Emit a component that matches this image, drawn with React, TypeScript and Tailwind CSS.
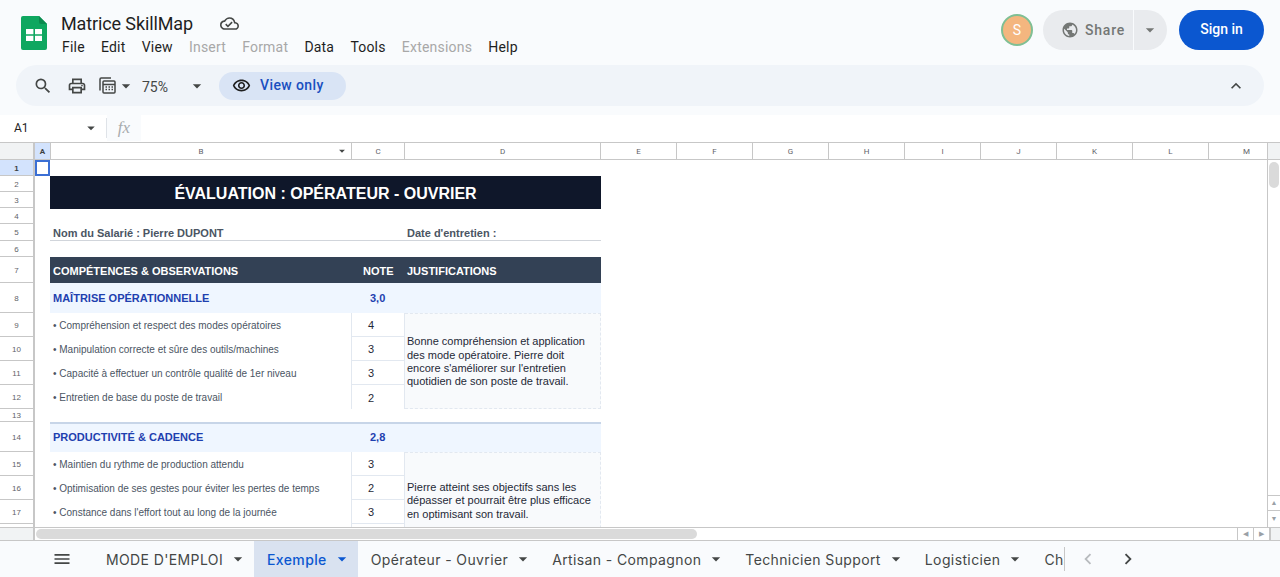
import {
  MdArrowDropDown,
  MdChevronLeft,
  MdChevronRight,
  MdExpandLess,
  MdMenu,
  MdOutlineCloudDone,
  MdOutlinePrint,
  MdOutlineRemoveRedEye,
  MdPublic,
  MdSearch,
} from 'react-icons/md';

const menuItems = [
  { label: 'File' },
  { label: 'Edit' },
  { label: 'View' },
  { label: 'Insert', disabled: true },
  { label: 'Format', disabled: true },
  { label: 'Data' },
  { label: 'Tools' },
  { label: 'Extensions', disabled: true },
  { label: 'Help' },
];

const rowHeaders = [
  { n: 1, h: 'h-[16px]' },
  { n: 2, h: 'h-[16px]' },
  { n: 3, h: 'h-[16px]' },
  { n: 4, h: 'h-[16px]' },
  { n: 5, h: 'h-[17px]' },
  { n: 6, h: 'h-[16px]' },
  { n: 7, h: 'h-[26px]' },
  { n: 8, h: 'h-[30px]' },
  { n: 9, h: 'h-[24px]' },
  { n: 10, h: 'h-[24px]' },
  { n: 11, h: 'h-[24px]' },
  { n: 12, h: 'h-[24px]' },
  { n: 13, h: 'h-[13px]' },
  { n: 14, h: 'h-[30px]' },
  { n: 15, h: 'h-[24px]' },
  { n: 16, h: 'h-[24px]' },
  { n: 17, h: 'h-[24px]' },
  { n: 18, h: 'h-[24px]' },
];

const otherColumns = ['E', 'F', 'G', 'H', 'I', 'J', 'K', 'L', 'M'];

const tabs = ['MODE D\'EMPLOI', 'Exemple', 'Opérateur - Ouvrier', 'Artisan - Compagnon', 'Technicien Support', 'Logisticien'];

const CalcIcon = () => (
  <svg width="19" height="19" viewBox="0 0 19 19" fill="none" stroke="#444746" strokeWidth="1.5">
    <path d="M2 14.5V3.2C2 2.5 2.5 2 3.2 2H13" />
    <rect x="5" y="5" width="12" height="12" rx="1" />
    <path d="M5 8.5h12" />
    <path d="M7.5 11h1.5M10.5 11H12M13.5 11h1.5M7.5 13.5h1.5M10.5 13.5H12M13.5 13.5h1.5" strokeWidth="1.4" />
  </svg>
);

const SheetsLogo = () => (
  <svg width="26" height="34" viewBox="0 0 26 34" className="shrink-0">
    <path d="M2 0h16l8 8v24a2 2 0 0 1-2 2H2a2 2 0 0 1-2-2V2a2 2 0 0 1 2-2z" fill="#0fa760" />
    <path d="M18 0l8 8h-6a2 2 0 0 1-2-2z" fill="#0b8a4e" />
    <path d="M5 13h16v12H5z" fill="#fff" />
    <path d="M12.4 13h1.6v12h-1.6zM5 18.3h16v1.5H5z" fill="#0fa760" />
  </svg>
);

const Item = ({ label, note, last }: { label: string; note: number; last?: boolean }) => (
  <>
    <div className="flex items-center pl-[3px] text-[10px] text-[#4b5563]">• {label}</div>
    <div
      className={`flex items-center border-x border-[#e2e8f0] pl-[16px] pt-[2px] text-[11px] text-[#1f2937] ${
        last ? '' : 'border-b'
      }`}
    >
      {note}
    </div>
  </>
);

const Justification = ({ lines }: { lines: string[] }) => (
  <div className="row-span-4 flex flex-col justify-center border-y border-r border-dashed border-[#e2e8f0] bg-[#f8fafc] pl-[2px] pt-[2px] text-[11px] leading-[13.4px] text-[#1f2937]">
    {lines.map((line) => (
      <span key={line} className="whitespace-nowrap">{line}</span>
    ))}
  </div>
);

const App = () => {
  return (
    <div className="flex h-[577px] w-[1280px] flex-col overflow-hidden bg-white font-['Roboto',sans-serif]">
      <div className="h-[115px] shrink-0 bg-[#f9fbfd]">
        <div className="flex h-[65px]">
          <div className="ml-[21px] mt-[16px]">
            <SheetsLogo />
          </div>
          <div className="ml-[14px] mt-[11px]">
            <div className="flex h-[24px] items-center text-[18px] tracking-[-0.12px] text-[#1f1f1f]">
              <span>Matrice SkillMap</span>
              <MdOutlineCloudDone className="ml-[27px] text-[19px] text-[#444746]" />
            </div>
            <div className="mt-[1px] flex h-[22px] items-center gap-[16.2px] pl-[1px] text-[14px] tracking-[0.2px]">
              {menuItems.map((item) => (
                <span key={item.label} className={item.disabled ? 'text-[#a8a8a8]' : 'text-[#1f1f1f]'}>
                  {item.label}
                </span>
              ))}
            </div>
          </div>
          <div className="ml-auto mr-[16px] mt-[10px] flex h-[40px] items-center">
            <div className="flex h-[32px] w-[32px] items-center justify-center rounded-full border-2 border-[#7fbf94] bg-[#f4b67f] text-[14px] text-white">
              S
            </div>
            <div className="ml-[10px] flex h-[40px] w-[124px] items-center rounded-full bg-[#e9ebee] text-[#747775]">
              <MdPublic className="ml-[18px] text-[18px]" />
              <span className="ml-[6px] text-[14px] font-medium tracking-[0.8px]">Share</span>
              <div className="ml-[8px] h-[40px] w-px bg-[#f9fbfd]" />
              <MdArrowDropDown className="ml-[6px] text-[20px]" />
            </div>
            <div className="ml-[12px] flex h-[40px] w-[85px] items-center justify-center rounded-full bg-[#0b57d0] pb-[2px] text-[14px] font-medium text-white">
              Sign in
            </div>
          </div>
        </div>
        <div className="mx-[16px] flex h-[41px] items-center rounded-full bg-[#f0f4f9] text-[#444746]">
          <MdSearch className="ml-[17px] text-[20px]" />
          <MdOutlinePrint className="ml-[14px] text-[20px]" />
          <div className="ml-[11px]">
            <CalcIcon />
          </div>
          <MdArrowDropDown className="ml-[-1px] text-[20px]" />
          <span className="ml-[6px] mt-[4px] text-[14px]">75%</span>
          <MdArrowDropDown className="ml-[19px] text-[20px]" />
          <div className="ml-[12px] flex h-[28px] w-[127px] items-center rounded-full bg-[#d9e4f5]">
            <MdOutlineRemoveRedEye className="ml-[13px] text-[19px] text-[#1f1f1f]" />
            <span className="ml-[9px] text-[14px] font-medium tracking-[0.4px] text-[#1a4fc0]">View only</span>
          </div>
          <MdExpandLess className="ml-auto mr-[18px] text-[20px]" />
        </div>
      </div>

      <div className="flex h-[28px] shrink-0 items-center border-b border-[#c7c7c7] bg-white pb-[1px]">
        <span className="ml-[14px] w-[68px] text-[12px] text-[#1f1f1f]">A1</span>
        <MdArrowDropDown className="text-[18px] text-[#444746]" />
        <div className="ml-[6px] h-[20px] w-px bg-[#dfe3e8]" />
        <div className="flex h-full w-[34px] items-center justify-center bg-[#f9fbfd] font-['Liberation_Serif',serif] text-[17px] italic text-[#a8abae]">
          fx
        </div>
      </div>

      <div className="flex h-[384px] shrink-0">
        <div className="w-[1268px] overflow-hidden border-r border-[#c7c7c7]">
          <div className="flex h-[17px] w-[1400px] border-b border-[#c7c7c7] pt-[2px] text-[8px] text-[#5f6368]">
            <div className="mt-[-2px] w-[33px] bg-[#f1f3f4]" />
            <div className="mt-[-2px] w-[2px] bg-[#c7c7c7]" />
            <div className="mt-[-2px] flex w-[15px] items-center justify-center bg-[#d3e3fd] pt-[2px] font-bold text-[#3c4043]">A</div>
            <div className="relative mt-[-2px] flex w-[302px] items-center justify-center border-x border-[#c7c7c7] pt-[2px]">
              B
              <MdArrowDropDown className="absolute right-[2px] top-[1px] text-[14px] text-[#444746]" />
            </div>
            <div className="mt-[-2px] flex w-[53px] items-center justify-center border-r border-[#c7c7c7] pt-[2px]">C</div>
            <div className="mt-[-2px] flex w-[196px] items-center justify-center border-r border-[#c7c7c7] pt-[2px]">D</div>
            {otherColumns.map((c) => (
              <div key={c} className="mt-[-2px] flex w-[76px] items-center justify-center border-r border-[#c7c7c7] pt-[2px]">{c}</div>
            ))}
          </div>

          <div className="flex font-['Liberation_Sans',sans-serif]">
            <div className="w-[35px] shrink-0 border-r-2 border-[#c7c7c7]">
              {rowHeaders.map((row) => (
                <div
                  key={row.n}
                  className={`${row.h} flex items-center justify-center border-b border-[#c7c7c7] pt-[2px] text-[8px] ${
                    row.n === 1 ? 'bg-[#d3e3fd] font-bold text-[#3c4043]' : 'text-[#5f6368]'
                  }`}
                >
                  {row.n}
                </div>
              ))}
            </div>

            <div className="w-[15px] shrink-0">
              <div className="h-[16px] border-2 border-[#3b6fd4]" />
            </div>

            <div className="grid grid-cols-[301px_54px_196px] grid-rows-[16px_16px_17px_15px_17px_16px_26px_30px_24px_24px_24px_24px_13px_30px_24px_24px_24px_24px]">
              <div className="col-span-3" />
              <div className="col-span-3 row-span-2 flex items-center justify-center bg-[#0f172a] pt-[2px] text-[16px] font-bold text-white">
                ÉVALUATION : OPÉRATEUR - OUVRIER
              </div>
              <div className="col-span-3" />

              <div className="col-span-2 flex items-center border-b border-[#d1d5db] pl-[3px] pt-[2px] text-[11px] font-bold text-[#4b5563]">
                Nom du Salarié : Pierre DUPONT
              </div>
              <div className="flex items-center border-b border-[#d1d5db] pl-[2px] pt-[2px] text-[11px] font-bold text-[#4b5563]">
                Date d'entretien :
              </div>
              <div className="col-span-3" />

              <div className="flex items-center bg-[#334155] pl-[3px] pt-[2px] text-[11px] font-bold text-white">
                COMPÉTENCES &amp; OBSERVATIONS
              </div>
              <div className="flex items-center bg-[#334155] pl-[12px] pt-[2px] text-[11px] font-bold text-white">NOTE</div>
              <div className="flex items-center bg-[#334155] pl-[2px] pt-[2px] text-[11px] font-bold text-white">JUSTIFICATIONS</div>

              <div className="flex items-center bg-[#eff6ff] pl-[3px] text-[11px] font-bold text-[#1e40af]">
                MAÎTRISE OPÉRATIONNELLE
              </div>
              <div className="flex items-center bg-[#eff6ff] pl-[19px] text-[11px] font-bold text-[#1e40af]">3,0</div>
              <div className="bg-[#eff6ff]" />
              <Item label="Compréhension et respect des modes opératoires" note={4} />
              <Justification
                lines={[
                  'Bonne compréhension et application',
                  'des mode opératoire. Pierre doit',
                  "encore s'améliorer sur l'entretien",
                  'quotidien de son poste de travail.',
                ]}
              />
              <Item label="Manipulation correcte et sûre des outils/machines" note={3} />
              <Item label="Capacité à effectuer un contrôle qualité de 1er niveau" note={3} />
              <Item label="Entretien de base du poste de travail" note={2} last />
              <div className="col-span-3" />

              <div className="flex items-center border-t-2 border-[#c7d5e8] bg-[#eff6ff] pb-[2px] pl-[3px] text-[11px] font-bold text-[#1e40af]">
                PRODUCTIVITÉ &amp; CADENCE
              </div>
              <div className="flex items-center border-t-2 border-[#c7d5e8] bg-[#eff6ff] pb-[2px] pl-[19px] text-[11px] font-bold text-[#1e40af]">2,8</div>
              <div className="border-t-2 border-[#c7d5e8] bg-[#eff6ff]" />
              <Item label="Maintien du rythme de production attendu" note={3} />
              <Justification
                lines={[
                  'Pierre atteint ses objectifs sans les',
                  'dépasser et pourrait être plus efficace',
                  'en optimisant son travail.',
                ]}
              />
              <Item label="Optimisation de ses gestes pour éviter les pertes de temps" note={2} />
              <Item label="Constance dans l'effort tout au long de la journée" note={3} />
              <div />
              <div className="border-x border-[#e2e8f0]" />
            </div>
          </div>
        </div>

        <div className="flex w-[12px] flex-col">
          <div className="h-[17px] border-b border-[#c7c7c7] bg-[#f1f3f4]" />
          <div className="mx-[1px] mt-[2px] h-[26px] rounded-full bg-[#dadada]" />
          <div className="mt-auto flex h-[16px] items-center justify-center border-y border-[#c7c7c7] text-[7px] text-[#9aa0a6]">▲</div>
          <div className="flex h-[16px] items-center justify-center text-[7px] text-[#9aa0a6]">▼</div>
        </div>
      </div>

      <div className="flex h-[14px] shrink-0 items-center border-y border-[#c7c7c7]">
        <div className="h-full w-[35px] border-r-2 border-[#c7c7c7] bg-[#f1f3f4]" />
        <div className="ml-[1px] h-[10px] w-[661px] rounded-full bg-[#dadada]" />
        <div className="ml-auto flex h-full">
          <div className="flex w-[16px] items-center justify-center border-l border-[#c7c7c7] text-[7px] text-[#9aa0a6]">◀</div>
          <div className="flex w-[16px] items-center justify-center border-l border-[#c7c7c7] text-[7px] text-[#9aa0a6]">▶</div>
          <div className="w-[11px] border-l-2 border-[#c7c7c7] bg-[#f1f3f4]" />
        </div>
      </div>

      <div className="flex h-[36px] shrink-0 items-center bg-[#f9fbfd] font-['Inter',sans-serif] text-[14px] text-[#444746]">
        <MdMenu className="ml-[52px] text-[20px]" />
        <div className="ml-[21px] flex h-full w-[971px] overflow-hidden">
          {tabs.map((tab) => (
            <div
              key={tab}
              className={`flex h-full shrink-0 items-center pl-[13px] pr-[6px] tracking-[0.38px] ${
                tab === 'Exemple' ? 'bg-[#d9e2f0] font-medium text-[#0b57d0]' : ''
              }`}
            >
              <span className="whitespace-nowrap">{tab}</span>
              <MdArrowDropDown className="ml-[5px] text-[20px]" />
            </div>
          ))}
          <div className="flex h-full shrink-0 items-center whitespace-nowrap pl-[13px] tracking-[0.38px]">Chargé de mission</div>
        </div>
        <div className="h-[24px] w-px bg-[#c7c7c7]" />
        <MdChevronLeft className="ml-[12px] text-[22px] text-[#b8bbbe]" />
        <MdChevronRight className="ml-[18px] text-[22px]" />
      </div>
    </div>
  );
};

export default App;
